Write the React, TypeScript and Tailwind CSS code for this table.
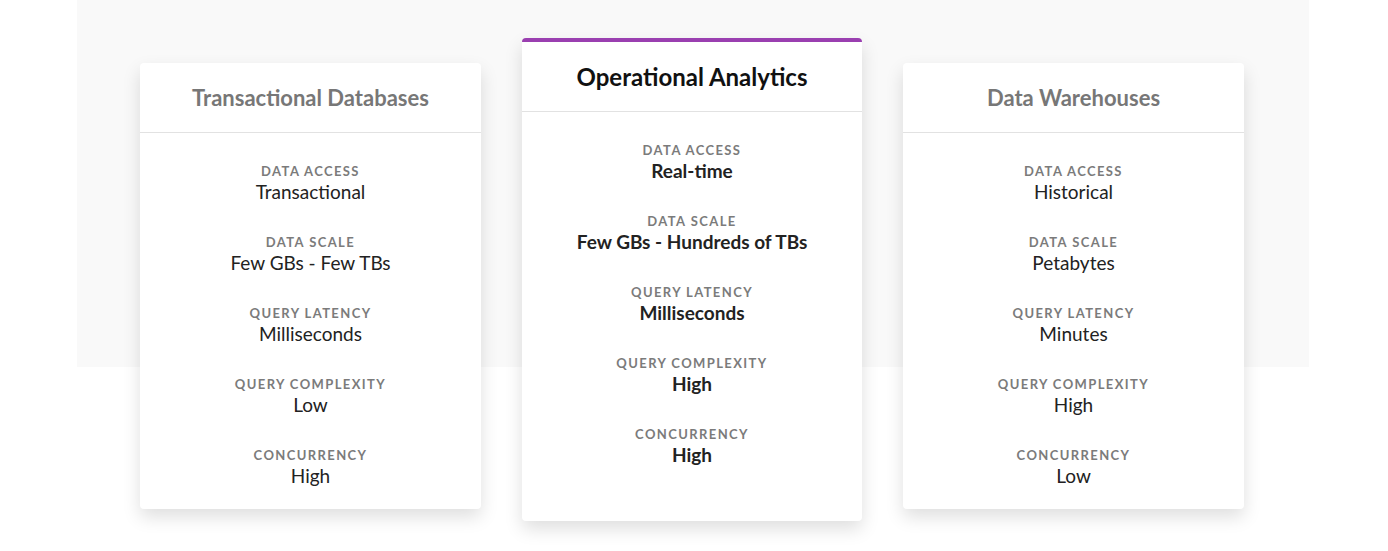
import React from "react";

type Row = { label: string; value: string };

const left: Row[] = [
  { label: "Data Access", value: "Transactional" },
  { label: "Data Scale", value: "Few GBs - Few TBs" },
  { label: "Query Latency", value: "Milliseconds" },
  { label: "Query Complexity", value: "Low" },
  { label: "Concurrency", value: "High" },
];
const mid: Row[] = [
  { label: "Data Access", value: "Real-time" },
  { label: "Data Scale", value: "Few GBs - Hundreds of TBs" },
  { label: "Query Latency", value: "Milliseconds" },
  { label: "Query Complexity", value: "High" },
  { label: "Concurrency", value: "High" },
];
const right: Row[] = [
  { label: "Data Access", value: "Historical" },
  { label: "Data Scale", value: "Petabytes" },
  { label: "Query Latency", value: "Minutes" },
  { label: "Query Complexity", value: "High" },
  { label: "Concurrency", value: "Low" },
];

function Card({ title, rows, featured }: { title: string; rows: Row[]; featured?: boolean }) {
  return (
    <div
      className={
        featured
          ? "w-[340px] h-[483px] bg-white rounded-[4px] border-t-4 border-[#9a3fb0] shadow-[0_8px_18px_rgba(0,0,0,0.13)] flex flex-col"
          : "w-[341px] h-[446px] mt-[25px] bg-white rounded-[4px] shadow-[0_8px_18px_rgba(0,0,0,0.13)] flex flex-col"
      }
    >
      <div className="h-[70px] flex items-center justify-center border-b border-[#e2e2e2]">
        <span
          className={
            featured
              ? "text-[24px] font-bold text-[#111111] leading-none"
              : "text-[22px] font-bold text-[#777777] leading-none"
          }
        >
          {title}
        </span>
      </div>
      <div className="flex flex-col items-center gap-[29px] pt-[28px]">
        {rows.map((r) => (
          <div key={r.label} className="flex flex-col items-center">
            <div className="h-[20px] leading-[20px] text-[13px] font-bold uppercase tracking-[1.4px] text-[#7b7b7b]">
              {r.label}
            </div>
            <div
              className={
                featured
                  ? "h-[22px] leading-[22px] text-[19px] font-bold text-[#222222]"
                  : "h-[22px] leading-[22px] text-[19px] text-[#222222]"
              }
            >
              {r.value}
            </div>
          </div>
        ))}
      </div>
    </div>
  );
}

export default function App() {
  return (
    <div className="w-[1388px] h-[551px] bg-white overflow-hidden" style={{ fontFamily: "Lato, 'Open Sans', sans-serif" }}>
      <div className="ml-[77px] w-[1232px] h-[367px] bg-[#f9f9f9] pt-[38px] pl-[63px]">
        <div className="flex items-start gap-[41px]">
          <Card title="Transactional Databases" rows={left} />
          <Card title="Operational Analytics" rows={mid} featured />
          <Card title="Data Warehouses" rows={right} />
        </div>
      </div>
    </div>
  );
}
